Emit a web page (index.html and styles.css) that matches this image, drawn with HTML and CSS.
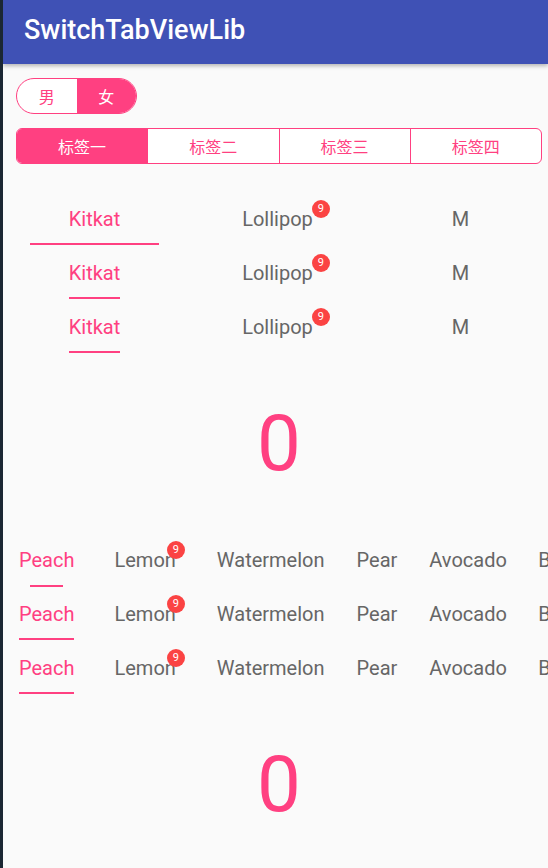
FILE: index.html
```html
<!DOCTYPE html>
<html lang="zh">
<head>
<meta charset="utf-8">
<title>SwitchTabViewLib</title>
<link rel="stylesheet" href="styles.css">
</head>
<body>
<div class="frame">
  <div class="app">
    <header class="toolbar"><h1 class="title">SwitchTabViewLib</h1></header>
    <main class="content">
      <div class="controls">
        <div class="switch">
          <span class="sw-item">男</span>
          <span class="sw-item active">女</span>
        </div>
        <div class="segments">
          <span class="seg active">标签一</span>
          <span class="seg">标签二</span>
          <span class="seg">标签三</span>
          <span class="seg">标签四</span>
        </div>
      </div>

      <section class="fixed-tabs">
        <div class="ftab-row wide-ind">
          <div class="ftab sel"><span class="lbl">Kitkat</span><i class="ind"></i></div>
          <div class="ftab"><span class="lbl">Lollipop<b class="badge b-top">9</b></span></div>
          <div class="ftab"><span class="lbl">M</span></div>
        </div>
        <div class="ftab-row">
          <div class="ftab sel"><span class="lbl">Kitkat<i class="ind"></i></span></div>
          <div class="ftab"><span class="lbl">Lollipop<b class="badge b-top">9</b></span></div>
          <div class="ftab"><span class="lbl">M</span></div>
        </div>
        <div class="ftab-row">
          <div class="ftab sel"><span class="lbl">Kitkat<i class="ind"></i></span></div>
          <div class="ftab"><span class="lbl">Lollipop<b class="badge b-top">9</b></span></div>
          <div class="ftab"><span class="lbl">M</span></div>
        </div>
      </section>

      <div class="pager"><span class="num">0</span></div>

      <section class="scroll-tabs">
        <div class="stab-row short-ind">
          <div class="stab s1 sel"><span class="lbl">Peach<i class="ind"></i></span></div>
          <div class="stab s2"><span class="lbl">Lemon<b class="badge b-over">9</b></span></div>
          <div class="stab s3"><span class="lbl">Watermelon</span></div>
          <div class="stab s4"><span class="lbl">Pear</span></div>
          <div class="stab s5"><span class="lbl">Avocado</span></div>
          <div class="stab s6"><span class="lbl">Banana</span></div>
        </div>
        <div class="stab-row">
          <div class="stab s1 sel"><span class="lbl">Peach<i class="ind"></i></span></div>
          <div class="stab s2"><span class="lbl">Lemon<b class="badge b-over">9</b></span></div>
          <div class="stab s3"><span class="lbl">Watermelon</span></div>
          <div class="stab s4"><span class="lbl">Pear</span></div>
          <div class="stab s5"><span class="lbl">Avocado</span></div>
          <div class="stab s6"><span class="lbl">Banana</span></div>
        </div>
        <div class="stab-row">
          <div class="stab s1 sel"><span class="lbl">Peach<i class="ind"></i></span></div>
          <div class="stab s2"><span class="lbl">Lemon<b class="badge b-over">9</b></span></div>
          <div class="stab s3"><span class="lbl">Watermelon</span></div>
          <div class="stab s4"><span class="lbl">Pear</span></div>
          <div class="stab s5"><span class="lbl">Avocado</span></div>
          <div class="stab s6"><span class="lbl">Banana</span></div>
        </div>
      </section>

      <div class="pager"><span class="num">0</span></div>
    </main>
  </div>
</div>
</body>
</html>
```

FILE: styles.css
```css
* { box-sizing: border-box; }
html, body { margin: 0; padding: 0; }
body {
  width: 548px;
  height: 868px;
  overflow: hidden;
  background: #1b2733;
  font-family: Roboto, "Noto Sans", "Noto Sans CJK SC", sans-serif;
}
.frame {
  display: flex;
  height: 868px;
  padding-left: 3px;
}
.app {
  flex: 1;
  min-width: 0;
  background: #fafafa;
  overflow: hidden;
  display: flex;
  flex-direction: column;
}
.toolbar {
  height: 64px;
  flex: none;
  background: #3f51b5;
  display: flex;
  align-items: center;
  padding-left: 21px;
  box-shadow: 0 2px 4px rgba(0,0,0,0.28);
  position: relative;
  z-index: 1;
}
.title {
  margin: 0;
  color: #fff;
  font-size: 27px;
  font-weight: 500;
  line-height: 32px;
  padding-bottom: 5px;
}
.content { display: flex; flex-direction: column; }
.controls {
  padding: 14px 6px 0 13px;
  display: flex;
  flex-direction: column;
  gap: 14px;
  font-family: "Noto Sans CJK SC", sans-serif;
}
.switch {
  width: 121px;
  height: 36px;
  border: 1.5px solid #ff4081;
  border-radius: 18px;
  overflow: hidden;
  display: flex;
  background: #fff;
}
.sw-item {
  flex: 1;
  display: flex;
  align-items: center;
  justify-content: center;
  color: #ff4081;
  font-size: 16px;
}
.sw-item.active { background: #ff4081; color: #fff; }
.segments {
  height: 36px;
  border: 1.5px solid #ff4081;
  border-radius: 6px;
  overflow: hidden;
  display: flex;
  background: #fff;
}
.seg {
  flex: 1;
  display: flex;
  align-items: center;
  justify-content: center;
  color: #ff4081;
  font-size: 16px;
  border-left: 1.5px solid #ff4081;
}
.seg:first-child { border-left: 0; }
.seg.active { background: #ff4081; color: #fff; }

.lbl {
  position: relative;
  display: inline-block;
  line-height: 24px;
  font-size: 20px;
  color: #666;
  white-space: nowrap;
}
.sel .lbl { color: #ff4081; }
.ind {
  position: absolute;
  left: 0;
  right: 0;
  height: 2px;
  background: #ff4081;
}
.badge {
  position: absolute;
  top: -7px;
  width: 18px;
  height: 18px;
  border-radius: 50%;
  background: #fb4343;
  color: #fff;
  font-size: 11px;
  font-weight: 400;
  line-height: 18px;
  text-align: center;
}
.b-top { left: calc(100% - 1px); }
.b-over { left: calc(100% - 9px); }

.fixed-tabs {
  margin-top: 28px;
  display: flex;
  flex-direction: column;
}
.ftab-row {
  display: flex;
  width: 549px;
  height: 54px;
}
.ftab {
  width: 183px;
  flex: none;
  position: relative;
  display: flex;
  align-items: center;
  justify-content: center;
}
.ftab .lbl .ind { top: 36px; }
.wide-ind .ftab > .ind { left: 27px; right: 27px; top: 51px; }

.pager {
  height: 179px;
  display: flex;
  align-items: center;
  justify-content: center;
}
.num {
  color: #ff4081;
  font-size: 78px;
  font-weight: 400;
  line-height: 1;
  margin-left: 7px;
}

.scroll-tabs { display: flex; flex-direction: column; }
.stab-row {
  display: flex;
  height: 54px;
  white-space: nowrap;
}
.stab {
  flex: none;
  display: flex;
  align-items: center;
  padding: 0 16px;
}
.s1 { padding-left: 16px; padding-right: 20.5px; }
.s2 { padding-left: 19.5px; padding-right: 20px; }
.s3 { padding-left: 21px; padding-right: 15.5px; }
.s4 { padding-left: 16.5px; padding-right: 16px; }
.s5 { padding-left: 16px; padding-right: 15.5px; }
.stab .lbl .ind { top: 36px; }
.short-ind .s1 .ind { left: 11px; right: 11px; top: 37px; }
```
